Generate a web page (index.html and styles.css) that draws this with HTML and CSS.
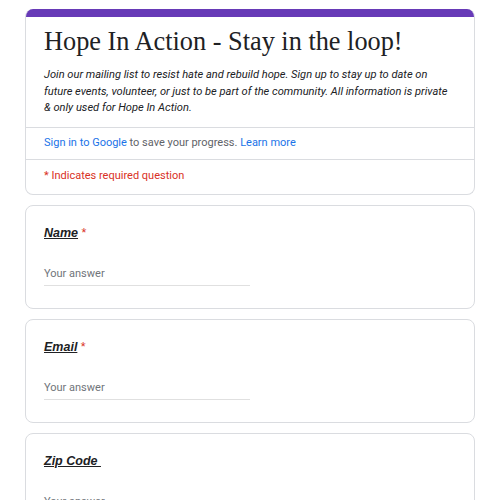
FILE: index.html
```html
<!DOCTYPE html>
<html>
<head>
<meta charset="utf-8">
<link rel="stylesheet" href="styles.css">
</head>
<body>
<div class="page">
  <div class="card header">
    <div class="topbar"></div>
    <div class="head-main">
      <h1 class="title">Hope In Action - Stay in the loop!</h1>
      <p class="desc">Join our mailing list to resist hate and rebuild hope. Sign up to stay up to date on future events, volunteer, or just to be part of the community. All information is private &amp; only used for Hope In Action.</p>
    </div>
    <div class="signin"><span class="link">Sign in to Google</span> to save your progress. <span class="link">Learn more</span></div>
    <div class="required">* Indicates required question</div>
  </div>

  <div class="card question">
    <div class="qlabel"><span class="qtext">Name</span><span class="star"> *</span></div>
    <div class="answer">Your answer</div>
  </div>

  <div class="card question">
    <div class="qlabel"><span class="qtext">Email</span><span class="star"> *</span></div>
    <div class="answer">Your answer</div>
  </div>

  <div class="card question">
    <div class="qlabel"><span class="qtext">Zip Code&nbsp;</span></div>
    <div class="answer">Your answer</div>
  </div>
</div>
</body>
</html>
```

FILE: styles.css
```css
html, body {
  margin: 0;
  padding: 0;
  background: #ffffff;
}
.page {
  padding: 9px 25px;
  display: flex;
  flex-direction: column;
  gap: 10px;
  font-family: Roboto, "Liberation Sans", sans-serif;
}
.card {
  width: 450px;
  box-sizing: border-box;
  border: 1px solid #dadce0;
  border-radius: 8px;
  background: #fff;
  overflow: hidden;
  flex-shrink: 0;
}
.header {
  border-top: none;
}
.topbar {
  height: 8px;
  background: #673ab7;
  margin: 0 -1px;
}
.head-main {
  padding: 9px 18px 10px 18px;
  border-bottom: 1px solid #dadce0;
}
.title {
  margin: 0;
  font-family: "Liberation Serif", "DejaVu Serif", serif;
  font-weight: normal;
  font-size: 26.3px;
  line-height: 32px;
  color: #202124;
}
.desc {
  margin: 9px 0 0 0;
  font-size: 11.1px;
  line-height: 16.5px;
  font-style: italic;
  color: #202124;
}
.signin {
  padding: 7px 18px 8px;
  font-size: 11px;
  line-height: 16px;
  color: #5f6368;
  border-bottom: 1px solid #dadce0;
}
.link {
  color: #1a73e8;
}
.required {
  padding: 8px 18px 10px;
  font-size: 11px;
  line-height: 16px;
  color: #d93025;
}
.question {
  height: 104px;
  padding: 18px 18px 0 18px;
}
.qlabel {
  font-size: 12.5px;
  line-height: 18px;
  font-family: "Liberation Sans", Arial, sans-serif;
}
.qtext {
  font-weight: bold;
  font-style: italic;
  text-decoration: underline;
  color: #202124;
}
.star {
  color: #d93025;
}
.answer {
  margin-top: 24px;
  width: 206px;
  font-size: 11px;
  line-height: 16px;
  padding-bottom: 3px;
  color: #70757a;
  border-bottom: 1px solid #e0e0e0;
}
```
